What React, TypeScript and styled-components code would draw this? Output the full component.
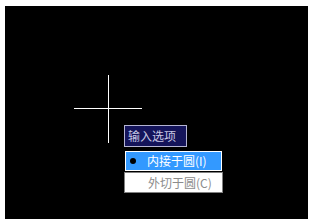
import React from 'react'
import styled, {createGlobalStyle} from 'styled-components'

const GlobalStyle = createGlobalStyle`
  html, body {
    margin: 0;
    padding: 0;
    background: #ffffff;
  }
  body {
    font-family: "Noto Sans CJK SC", "Noto Sans", sans-serif;
  }
`

const Page = styled.div`
  width: 315px;
  height: 219px;
  padding: 6px 7px 0 5px;
  box-sizing: border-box;
`

const Viewport = styled.div`
  position: relative;
  width: 303px;
  height: 213px;
  background: #000000;
  overflow: hidden;
`

const CrossLine = styled.div<{vertical?: boolean}>`
  position: absolute;
  background: #ffffff;
  ${({vertical}) =>
    vertical
      ? 'left: 103px; top: 69px; width: 1px; height: 68px;'
      : 'left: 69px; top: 102px; width: 68px; height: 1px;'}
`

const Prompt = styled.div`
  position: absolute;
  left: 119px;
  top: 119px;
  width: 63px;
  height: 22px;
  box-sizing: border-box;
  border: 1px solid #b4b4d2;
  background: #14145a;
  color: #c6c6e4;
  font-size: 12px;
  line-height: 20px;
  padding-left: 3px;
  white-space: nowrap;
`

const OptionList = styled.div`
  position: absolute;
  left: 119px;
  top: 145px;
  display: flex;
  flex-direction: column;
  gap: 1px;
`

const Option = styled.div<{selected?: boolean}>`
  display: flex;
  align-items: center;
  box-sizing: border-box;
  height: ${({selected}) => (selected ? '20px' : '21px')};
  width: ${({selected}) => (selected ? '97px' : '99px')};
  margin-left: ${({selected}) => (selected ? '1px' : '0')};
  border: 1px solid ${({selected}) => (selected ? '#ffffff' : '#808080')};
  background: ${({selected}) => (selected ? '#3399ff' : '#ffffff')};
  color: ${({selected}) => (selected ? '#ffffff' : '#8c8c8c')};
  font-size: 12px;
  line-height: 18px;
  white-space: nowrap;
`

const Bullet = styled.span<{visible?: boolean}>`
  width: 6px;
  height: 6px;
  border-radius: 50%;
  margin: 0 ${({visible}) => (visible ? '11px' : '12px')} 0 ${({visible}) => (visible ? '4px' : '5px')};
  background: ${({visible}) => (visible ? '#000000' : 'transparent')};
  flex: none;
`

const options = [
  {label: '内接于圆(I)', selected: true},
  {label: '外切于圆(C)', selected: false},
]

export default function App() {
  return (
    <>
      <GlobalStyle />
      <Page>
        <Viewport>
          <CrossLine vertical />
          <CrossLine />
          <Prompt>输入选项</Prompt>
          <OptionList>
            {options.map((o) => (
              <Option key={o.label} selected={o.selected}>
                <Bullet visible={o.selected} />
                {o.label}
              </Option>
            ))}
          </OptionList>
        </Viewport>
      </Page>
    </>
  )
}
